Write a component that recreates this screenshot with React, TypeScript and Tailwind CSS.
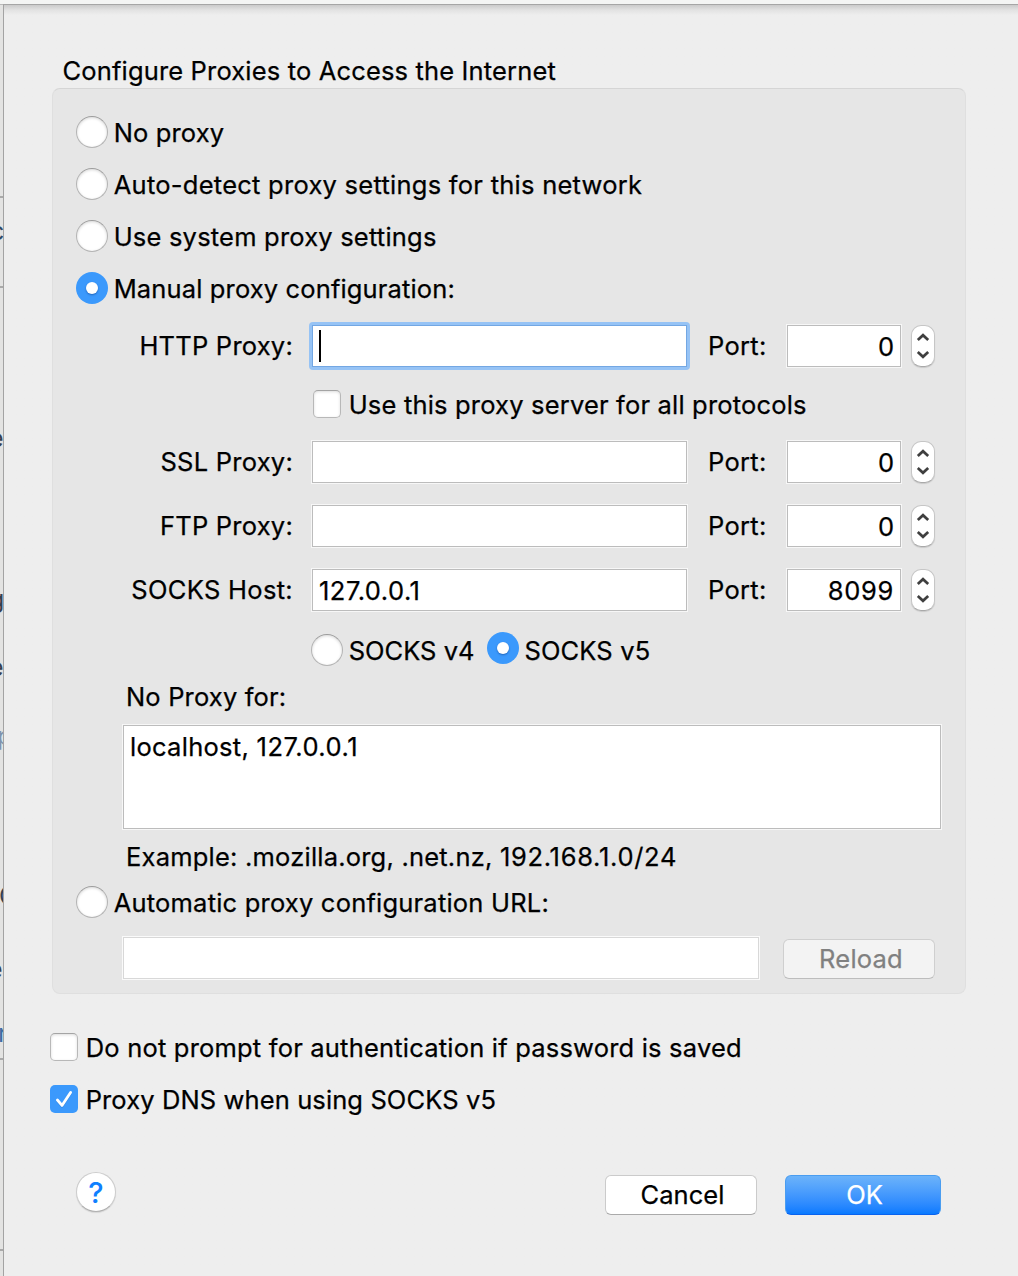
import type { ReactNode } from "react";

function Txt({ children, className = "" }: { children: ReactNode; className?: string }) {
  return (
    <span
      className={`block shrink-0 whitespace-nowrap text-[25.5px] leading-[30px] [-webkit-text-stroke:0.25px_currentColor] ${className}`}
    >
      {children}
    </span>
  );
}

function Radio({ on = false, className = "" }: { on?: boolean; className?: string }) {
  return on ? (
    <span className={`flex size-8 shrink-0 items-center justify-center rounded-full bg-[#3b99fc] ${className}`}>
      <span className="size-3 rounded-full bg-white shadow-[0_1px_2px_rgba(0,40,110,0.45)]" />
    </span>
  ) : (
    <span
      className={`size-8 shrink-0 rounded-full border border-[#b4b4b4] border-t-[#9c9c9c] bg-white shadow-[inset_0_1px_3px_rgba(0,0,0,0.16)] ${className}`}
    />
  );
}

function Check({ on = false }: { on?: boolean }) {
  return on ? (
    <span className="size-7 shrink-0 rounded-[5px] bg-[#3b99fc]">
      <svg viewBox="0 0 28 28" className="size-7" fill="none" strokeLinecap="round" strokeLinejoin="round">
        <path d="M7.4 15.8 12 21.2 20.6 8.2" stroke="#1c6fca" strokeOpacity="0.5" strokeWidth="2.8" />
        <path d="M7.4 15 12 20.4 20.6 7.4" stroke="#fff" strokeWidth="2.8" />
      </svg>
    </span>
  ) : (
    <span className="size-7 shrink-0 rounded-[5px] border border-[#b8b8b8] border-t-[#a4a4a4] bg-white shadow-[inset_0_1px_3px_rgba(0,0,0,0.14)]" />
  );
}

function Field({ children, className }: { children?: ReactNode; className: string }) {
  return (
    <span
      className={`flex h-[42px] shrink-0 border border-[#bcbcbc] bg-white pt-[6px] shadow-[0_0_0_1px_#f7f7f7] ${className}`}
    >
      {children}
    </span>
  );
}

function Stepper() {
  return (
    <span className="ml-[10px] h-[42px] w-6 shrink-0 rounded-[10px] border border-[#c6c6c6] border-b-[#a9a9a9] bg-white shadow-[0_1px_1px_rgba(0,0,0,0.12)]">
      <svg viewBox="0 0 22 40" className="h-10 w-[22px]" fill="none" stroke="#3f3f3f" strokeWidth="2.7">
        <path d="M5.8 14 11 9.2l5.2 4.8M5.8 26l5.2 4.8 5.2-4.8" />
      </svg>
    </span>
  );
}

function ProxyRow({
  label,
  track,
  value,
  port,
  focused = false,
  className,
}: {
  label: string;
  track: string;
  value?: string;
  port: string;
  focused?: boolean;
  className: string;
}) {
  return (
    <div className={`flex h-[42px] items-start ${className}`}>
      <Txt className={`mt-[6px] w-[240px] text-right ${track}`}>{label}</Txt>
      {focused ? (
        <span className="-mr-[3px] -mt-[3px] ml-4 flex h-12 w-[381px] shrink-0 rounded-[4px] bg-[#96c3f5] p-[3px]">
          <span className="flex h-[42px] w-[375px] border border-[#73a7e3] bg-white pl-[6px] pt-1">
            <span className="h-8 w-[2px] bg-black" />
          </span>
        </span>
      ) : (
        <Field className="ml-[19px] w-[375px] pl-[6px]">
          {value && <Txt className="tracking-[0.5px]">{value}</Txt>}
        </Field>
      )}
      <Txt className="ml-[21px] mt-[6px] w-[79px] tracking-[0.3px]">Port:</Txt>
      <Field className="w-[114px] justify-end pr-[6px]">
        <Txt className={port.length > 1 ? "tracking-[0.7px]" : ""}>{port}</Txt>
      </Field>
      <Stepper />
    </div>
  );
}

function Option({ label, on, track, className }: { label: string; on?: boolean; track: string; className: string }) {
  return (
    <div className={`flex h-8 items-start ${className}`}>
      <Radio on={on} />
      <Txt className={`ml-[5.7px] mt-[2px] ${track}`}>{label}</Txt>
    </div>
  );
}

function Behind({ children, className }: { children: ReactNode; className: string }) {
  return <span className={`absolute text-[25px] leading-[30px] ${className}`}>{children}</span>;
}

export default function App() {
  return (
    <div className="flex h-[1276px] w-[1018px] flex-col overflow-hidden bg-[#eeeeee] font-['Inter',sans-serif] text-black">
      <div className="h-1 shrink-0 bg-[#f4f5f4]" />
      <div className="flex h-[1272px]">
        <div className="relative w-[3px] shrink-0 overflow-hidden border-t border-[#b9b9b9] bg-[#e3e3e2] text-[#36404f]">
          <div className="absolute left-0 top-[191px] h-[2px] w-[3px] bg-[#a9a9a9]" />
          <Behind className="-left-[10px] top-[211px] text-[#2f4a68]">c</Behind>
          <div className="absolute left-0 top-[281px] h-[2px] w-[3px] bg-[#a9a9a9]" />
          <Behind className="-left-[11px] top-[418px]">e</Behind>
          <Behind className="-left-[11px] top-[579px]">g</Behind>
          <Behind className="-left-[11px] top-[647px]">e</Behind>
          <Behind className="-left-[3px] top-[716px] text-[#7f93ad]">p</Behind>
          <Behind className="-left-[1px] top-[876px]">C</Behind>
          <Behind className="-left-[12px] top-[949px]">e</Behind>
          <Behind className="-left-[2px] top-[1013px] text-[#3c6da3]">r</Behind>
          <div className="absolute left-0 top-[1053px] h-[2px] w-[3px] bg-[#a9a9a9]" />
          <div className="absolute left-0 top-[1244px] h-[2px] w-[3px] bg-[#a9a9a9]" />
        </div>
        <div className="flex w-[1015px] flex-col border-l border-t border-l-[#a3a3a3] border-t-[#a6a6a6] bg-linear-to-b from-[#cbcbcb] via-[#e2e2e2] via-[5px] to-[#eeeeee] to-[10px]">
          <Txt className="ml-[58.5px] mt-[51px] tracking-[0.158px]">Configure Proxies to Access the Internet</Txt>

          <div className="ml-12 mt-[2px] h-[906px] w-[914px] shrink-0 rounded-lg border border-[#dfdfdf] border-t-[#d5d5d5] bg-[#e6e6e6]">
            <div className="pl-[23px] pt-[27px]">
              <Option label="No proxy" track="tracking-[0.13px]" className="" />
              <Option label="Auto-detect proxy settings for this network" track="tracking-[0.26px]" className="mt-5" />
              <Option label="Use system proxy settings" track="tracking-[0.2px]" className="mt-5" />
              <Option label="Manual proxy configuration:" on track="tracking-[0.14px]" className="mt-5" />
            </div>

            <ProxyRow label="HTTP Proxy:" track="tracking-[0.224px]" port="0" focused className="mt-[21px]" />
            <div className="ml-[260px] mt-[23px] flex h-7 items-start">
              <Check />
              <Txt className="ml-[7.7px] tracking-[0.18px]">Use this proxy server for all protocols</Txt>
            </div>
            <ProxyRow label="SSL Proxy:" track="tracking-[0.25px]" port="0" className="mt-[23px]" />
            <ProxyRow label="FTP Proxy:" track="tracking-[0.233px]" port="0" className="mt-[22px]" />
            <ProxyRow label="SOCKS Host:" track="tracking-[0.305px]" value="127.0.0.1" port="8099" className="mt-[22px]" />

            <div className="ml-[258px] mt-[21px] flex h-[34px] items-start">
              <Radio className="mt-[2px]" />
              <Txt className="ml-[5.7px] mt-1 w-[138.3px] tracking-[0.01px]">SOCKS v4</Txt>
              <Radio on />
              <Txt className="ml-[5.5px] mt-1 tracking-[0.13px]">SOCKS v5</Txt>
            </div>

            <Txt className="ml-[73px] mt-4 tracking-[0.16px]">No Proxy for:</Txt>
            <div className="ml-[70px] mt-[13px] h-[104px] w-[818px] border border-[#bcbcbc] bg-white pl-[6px] pt-[6px] shadow-[0_0_0_1px_#f7f7f7]">
              <Txt className="tracking-[0.28px]">
                localhost, <span className="tracking-[0.5px]">127.0.0.1</span>
              </Txt>
            </div>
            <Txt className="ml-[73px] mt-[13px] tracking-[0.21px]">
              Example: .mozilla.org, .net.nz, <span className="tracking-[0.7px]">192.168.1.0/24</span>
            </Txt>

            <Option
              label="Automatic proxy configuration URL:"
              track="tracking-[0.205px]"
              className="ml-[23px] mt-[14px]"
            />
            <div className="ml-[70px] mt-[19px] flex items-start">
              <span className="h-[42px] w-[636px] border border-[#d8d8d8] bg-white shadow-[0_0_0_1px_#fafafa]" />
              <button className="ml-6 mt-[2px] flex h-10 w-[152px] justify-center rounded-md border border-[#cfcfcf] border-b-[#bdbdbd] bg-[#f3f3f3] pl-[4px] pt-[4px] text-[#808080]">
                <Txt className="tracking-[0.2px]">Reload</Txt>
              </button>
            </div>
          </div>

          <div className="ml-[46px] mt-[39px] flex h-7 items-start">
            <Check />
            <Txt className="ml-[7.7px] tracking-[0.2px]">Do not prompt for authentication if password is saved</Txt>
          </div>
          <div className="ml-[46px] mt-6 flex h-7 items-start">
            <Check on />
            <Txt className="ml-[7.7px] tracking-[0.11px]">Proxy DNS when using SOCKS v5</Txt>
          </div>

          <div className="ml-[72px] mt-[59px] flex items-start">
            <button className="flex size-10 justify-center rounded-full border border-[#cdcdcd] border-b-[#b0b0b0] bg-white pt-1 shadow-[0_1px_1px_rgba(0,0,0,0.1)]">
              <span className="text-[29px] font-medium leading-8 text-[#0f80ff]">?</span>
            </button>
            <button className="ml-[489px] mt-[3px] flex h-10 w-[152px] justify-center rounded-md border border-[#cbcbcb] border-b-[#aaaaaa] bg-white pl-[3px] pt-[4px]">
              <Txt className="tracking-[0.05px]">Cancel</Txt>
            </button>
            <button className="ml-7 mt-[3px] flex h-10 w-[156px] justify-center rounded-md border border-[#4a9df0] border-b-[#0a62ee] bg-linear-to-b from-[#6cb3fa] to-[#067aff] pl-[3px] pt-[4px] text-white">
              <Txt>OK</Txt>
            </button>
          </div>
        </div>
      </div>
    </div>
  );
}
